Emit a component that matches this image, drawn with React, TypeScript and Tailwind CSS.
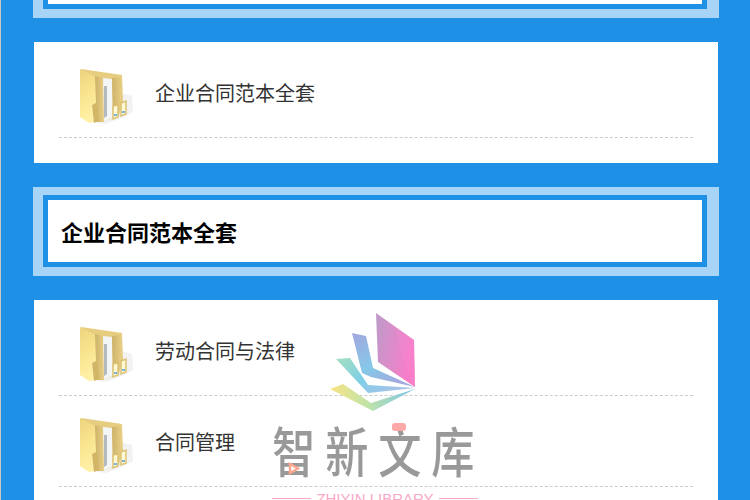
const CJK = "font-['Noto_Sans_CJK_SC','Liberation_Sans',sans-serif]";

function Folder() {
  return (
    <svg width="60" height="60" viewBox="0 0 60 60" className="mt-[7px] shrink-0 blur-[0.4px]">
      <defs>
        <linearGradient id="f1" x1="0" y1="0" x2="0.2" y2="1">
          <stop offset="0" stopColor="#ecd37f" />
          <stop offset="0.5" stopColor="#f9e48e" />
          <stop offset="1" stopColor="#fff0a6" />
        </linearGradient>
        <linearGradient id="f2" x1="0" y1="0" x2="1" y2="0">
          <stop offset="0" stopColor="#cdb26a" />
          <stop offset="1" stopColor="#e8cf85" />
        </linearGradient>
      </defs>
      <path d="M20 20 L57 30 L58 46 Q45 54 30 58 L18 56Z" fill="#f2f2f2" />
      <path d="M6 3 L47 9 L48 36 L40 52 L24 56Z" fill="#e6cd80" />
      <path d="M20 10 L29 12 L29 56 L20 56Z" fill="url(#f2)" />
      <path d="M28 12 L37 13 L38 52 L29 55Z" fill="#f4f5f5" />
      <path d="M29 20 L32 20 L32 50 L29 52Z" fill="#b4bbc0" />
      <path d="M37 12 L47 11 L47 36 L44 50 L38 52Z" fill="url(#f2)" />
      <path d="M38 40 L43 39 L43 51 L38 53Z" fill="#fff8d4" stroke="#dcc274" strokeWidth="1.5" />
      <path d="M46 37 L51 35 L51 48 L46 50Z" fill="#fff8d4" stroke="#dcc274" strokeWidth="1.5" />
      <rect x="39" y="48" width="3" height="2" fill="#79b4dc" />
      <rect x="47" y="45" width="3" height="2" fill="#79b4dc" />
      <path d="M5 3 L20 11 L21 37 L17 39 L19 56 L14 57 L5 51Z" fill="url(#f1)" />
      <path d="M17 39 L22 37 L24 55 L19 57Z" fill="#d2b666" />
    </svg>
  );
}

function Title({ text, first }: { text?: string; first?: boolean }) {
  return (
    <div className={`ml-[33px] mr-[31px] bg-[#a8d5f7] pt-2 pb-[9px] pl-[10px] pr-3 ${first ? "-mt-[71px]" : ""}`}>
      <div className="flex h-[72px] items-center border-[5px] border-[#1e91e6] bg-white pl-[13px]">
        <span className="text-[22px] font-bold text-black">{text}</span>
      </div>
    </div>
  );
}

function Row({ text }: { text: string }) {
  return (
    <div className="mx-[25px] flex h-[91px] items-center border-b border-dashed border-[#cccccc] pl-4">
      <Folder />
      <span className="mt-[2px] ml-5 text-[20px] text-[#333333]">{text}</span>
    </div>
  );
}

function Glyph({ c }: { c: string }) {
  return <span className="w-[53px] scale-x-[0.8] text-center whitespace-nowrap">{c}</span>;
}

function Watermark() {
  return (
    <div className="pointer-events-none absolute left-[264px] top-[310px] flex w-[220px] flex-col items-center">
      <svg width="95" height="105" viewBox="325 310 95 105" className="ml-[61px] shrink-0 self-start">
        <defs>
          <linearGradient id="w1" x1="0" y1="0" x2="1" y2="0.35">
            <stop offset="0" stopColor="#bd9cc9" />
            <stop offset="1" stopColor="#f87cc8" />
          </linearGradient>
          <linearGradient id="w2" x1="0" y1="0" x2="0.6" y2="1">
            <stop offset="0" stopColor="#a3a8de" />
            <stop offset="0.6" stopColor="#84c8e8" />
            <stop offset="1" stopColor="#a3a8de" />
          </linearGradient>
          <linearGradient id="w3" x1="0" y1="0" x2="1" y2="0.6">
            <stop offset="0" stopColor="#a5e0c0" />
            <stop offset="0.5" stopColor="#7fcfe6" />
            <stop offset="1" stopColor="#a8c0e8" />
          </linearGradient>
          <linearGradient id="w4" x1="0" y1="0" x2="1" y2="0">
            <stop offset="0" stopColor="#fbe384" />
            <stop offset="0.45" stopColor="#bfe3a8" />
            <stop offset="1" stopColor="#78c4ee" />
          </linearGradient>
        </defs>
        <path d="M375 313 L413 340 L414 387 L377 362Z" fill="url(#w1)" />
        <path d="M395 328 C 400 350 402 365 414 387 L413 340 Z" fill="#f88ad0" fillOpacity="0.35" />
        <path d="M351 333 L365 336 L372 368 L414 387 L370 377 L361 373Z" fill="url(#w2)" />
        <path d="M335 359 L349 358 L367 385 L414 388 L367 393Z" fill="url(#w3)" />
        <path d="M329 389 L342 384 L370 403 L414 389 L372 411Z" fill="url(#w4)" />
      </svg>
      <div className="relative mt-1 mr-1 flex h-[62px] items-center text-[54px] leading-none font-medium text-[#999999]">
        <Glyph c="智" />
        <Glyph c="新" />
        <Glyph c="文" />
        <Glyph c="库" />
        <span className="absolute left-[125px] top-1 h-2 w-[14px] rounded-[3px] bg-[#ffa8a8]" />
        <svg width="12" height="13" viewBox="0 0 12 13" className="absolute left-[21px] top-[43px]">
          <path d="M2 2 L10 6.5 L2 11Z" fill="#ffffff" stroke="#fba88f" strokeWidth="2.5" />
        </svg>
      </div>
      <div className="mt-[10px] flex w-[206px] items-center gap-[5px]">
        <span className="h-px flex-1 bg-[#f8a8c8]" />
        <span className="font-['Liberation_Sans',sans-serif] text-[15px] leading-none whitespace-nowrap text-[#f8a8c8]">ZHIYIN&nbsp;LIBRARY</span>
        <span className="h-px flex-1 bg-[#f8a8c8]" />
      </div>
    </div>
  );
}

export default function App() {
  return (
    <div className={`relative h-[500px] w-[750px] overflow-hidden border-l border-l-[#c8c8c8] bg-[#1e91e6] ${CJK}`}>
      <div className="-ml-px">
        <Title first />
        <div className="mx-[32px] mt-6 ml-[34px] h-[121px] bg-white pt-[5px]">
          <Row text="企业合同范本全套" />
        </div>
        <div className="mt-6">
          <Title text="企业合同范本全套" />
        </div>
        <div className="mx-[32px] mt-6 ml-[34px] h-[240px] bg-white pt-[5px]">
          <Row text="劳动合同与法律" />
          <Row text="合同管理" />
        </div>
      </div>
      <Watermark />
    </div>
  );
}
